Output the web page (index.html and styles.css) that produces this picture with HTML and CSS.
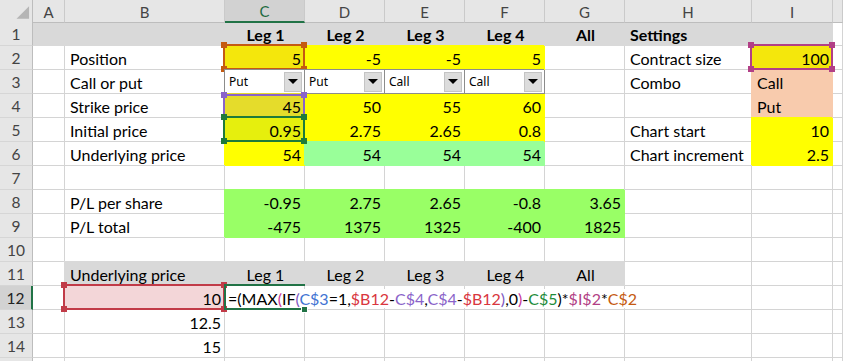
FILE: index.html
```html
<!DOCTYPE html>
<html>
<head>
<meta charset="utf-8">
<title>Option legs P/L</title>
<link rel="stylesheet" href="styles.css">
</head>
<body>
<div class="sheet">

  <div class="row hdr">
    <div class="corner"><svg width="33" height="22" viewBox="0 0 33 22"><polygon points="30,6 30,19 17,19" fill="#b5b5b5"/></svg></div>
    <div class="ch">A</div>
    <div class="ch">B</div>
    <div class="ch sel">C</div>
    <div class="ch">D</div>
    <div class="ch">E</div>
    <div class="ch">F</div>
    <div class="ch">G</div>
    <div class="ch">H</div>
    <div class="ch">I</div>
    <div class="ch"></div>
  </div>

  <div class="row">
    <div class="rh">1</div>
    <div class="c f-gr"></div>
    <div class="c f-gr"></div>
    <div class="c f-gr b ctr">Leg 1</div>
    <div class="c f-gr b ctr">Leg 2</div>
    <div class="c f-gr b ctr">Leg 3</div>
    <div class="c f-gr b ctr">Leg 4</div>
    <div class="c f-gr b ctr">All</div>
    <div class="c f-gr b">Settings</div>
    <div class="c f-gr"></div>
    <div class="c"></div>
  </div>

  <div class="row">
    <div class="rh">2</div>
    <div class="c"></div>
    <div class="c">Position</div>
    <div class="c num f-y2 ref ref-or">5</div>
    <div class="c num f-y">-5</div>
    <div class="c num f-y">-5</div>
    <div class="c num f-y">5</div>
    <div class="c"></div>
    <div class="c">Contract size</div>
    <div class="c num f-y2 ref ref-mg">100</div>
    <div class="c"></div>
  </div>

  <div class="row">
    <div class="rh">3</div>
    <div class="c"></div>
    <div class="c">Call or put</div>
    <div class="c combo"><span class="combo-text">Put</span><span class="combo-btn"></span></div>
    <div class="c combo"><span class="combo-text">Put</span><span class="combo-btn"></span></div>
    <div class="c combo"><span class="combo-text">Call</span><span class="combo-btn"></span></div>
    <div class="c combo"><span class="combo-text">Call</span><span class="combo-btn"></span></div>
    <div class="c"></div>
    <div class="c">Combo</div>
    <div class="c f-pe">Call</div>
    <div class="c"></div>
  </div>

  <div class="row">
    <div class="rh">4</div>
    <div class="c"></div>
    <div class="c">Strike price</div>
    <div class="c num f-y3 ref ref-pu">45</div>
    <div class="c num f-y">50</div>
    <div class="c num f-y">55</div>
    <div class="c num f-y">60</div>
    <div class="c"></div>
    <div class="c"></div>
    <div class="c f-pe">Put</div>
    <div class="c"></div>
  </div>

  <div class="row">
    <div class="rh">5</div>
    <div class="c"></div>
    <div class="c">Initial price</div>
    <div class="c num f-y4 ref ref-gn">0.95</div>
    <div class="c num f-y">2.75</div>
    <div class="c num f-y">2.65</div>
    <div class="c num f-y">0.8</div>
    <div class="c"></div>
    <div class="c">Chart start</div>
    <div class="c num f-y">10</div>
    <div class="c"></div>
  </div>

  <div class="row">
    <div class="rh">6</div>
    <div class="c"></div>
    <div class="c">Underlying price</div>
    <div class="c num f-y">54</div>
    <div class="c num f-lg">54</div>
    <div class="c num f-lg">54</div>
    <div class="c num f-lg">54</div>
    <div class="c"></div>
    <div class="c">Chart increment</div>
    <div class="c num f-y">2.5</div>
    <div class="c"></div>
  </div>

  <div class="row">
    <div class="rh">7</div>
    <div class="c"></div><div class="c"></div><div class="c"></div><div class="c"></div><div class="c"></div>
    <div class="c"></div><div class="c"></div><div class="c"></div><div class="c"></div><div class="c"></div>
  </div>

  <div class="row">
    <div class="rh">8</div>
    <div class="c"></div>
    <div class="c">P/L per share</div>
    <div class="c num f-g">-0.95</div>
    <div class="c num f-g">2.75</div>
    <div class="c num f-g">2.65</div>
    <div class="c num f-g">-0.8</div>
    <div class="c num f-g">3.65</div>
    <div class="c"></div>
    <div class="c"></div>
    <div class="c"></div>
  </div>

  <div class="row">
    <div class="rh">9</div>
    <div class="c"></div>
    <div class="c">P/L total</div>
    <div class="c num f-g">-475</div>
    <div class="c num f-g">1375</div>
    <div class="c num f-g">1325</div>
    <div class="c num f-g">-400</div>
    <div class="c num f-g">1825</div>
    <div class="c"></div>
    <div class="c"></div>
    <div class="c"></div>
  </div>

  <div class="row">
    <div class="rh">10</div>
    <div class="c"></div><div class="c"></div><div class="c"></div><div class="c"></div><div class="c"></div>
    <div class="c"></div><div class="c"></div><div class="c"></div><div class="c"></div><div class="c"></div>
  </div>

  <div class="row">
    <div class="rh">11</div>
    <div class="c"></div>
    <div class="c f-gr">Underlying price</div>
    <div class="c f-gr ctr">Leg 1</div>
    <div class="c f-gr ctr">Leg 2</div>
    <div class="c f-gr ctr">Leg 3</div>
    <div class="c f-gr ctr">Leg 4</div>
    <div class="c f-gr ctr">All</div>
    <div class="c"></div>
    <div class="c"></div>
    <div class="c"></div>
  </div>

  <div class="row">
    <div class="rh sel">12</div>
    <div class="c"></div>
    <div class="c num f-pk ref ref-rd">10</div>
    <div class="c edit"><span class="formula">=(MAX<span class="p2">(</span>IF<span class="p3">(</span><span class="k-bl">C$3</span>=1,<span class="k-rd">$B12</span>-<span class="k-pu">C$4</span>,<span class="k-pu">C$4</span>-<span class="k-rd">$B12</span><span class="p3">)</span>,0<span class="p2">)</span>-<span class="k-gn">C$5</span>)*<span class="k-mg">$I$2</span>*<span class="k-or">C$2</span></span></div>
    <div class="c"></div>
    <div class="c"></div>
    <div class="c"></div>
    <div class="c"></div>
    <div class="c"></div>
    <div class="c"></div>
    <div class="c"></div>
  </div>

  <div class="row">
    <div class="rh">13</div>
    <div class="c"></div>
    <div class="c num">12.5</div>
    <div class="c"></div><div class="c"></div><div class="c"></div><div class="c"></div>
    <div class="c"></div><div class="c"></div><div class="c"></div><div class="c"></div>
  </div>

  <div class="row">
    <div class="rh">14</div>
    <div class="c"></div>
    <div class="c num">15</div>
    <div class="c"></div><div class="c"></div><div class="c"></div><div class="c"></div>
    <div class="c"></div><div class="c"></div><div class="c"></div><div class="c"></div>
  </div>

  <div class="row">
    <div class="rh"></div>
    <div class="c"></div><div class="c"></div><div class="c"></div><div class="c"></div><div class="c"></div>
    <div class="c"></div><div class="c"></div><div class="c"></div><div class="c"></div><div class="c"></div>
  </div>

</div>
</body>
</html>
```

FILE: styles.css
```css
body {
    margin: 0;
    overflow: hidden;
    background: #fff;
    font-family: "Lato", "Liberation Sans", sans-serif;
    font-size: 16px;
    color: #000;
}
.sheet {
    width: 843px;
    height: 361px;
    overflow: hidden;
}
.row {
    display: grid;
    grid-template-columns: 33px 32px 160px 80px 80px 80px 80px 80px 127px 81px 1fr;
    height: 24px;
}
.hdr {
    height: 22px;
}

/* headers */
.corner, .ch, .rh {
    position: relative;
    z-index: 1;
    background: #e6e6e6;
    color: #444;
    display: flex;
    align-items: center;
    justify-content: center;
    box-sizing: border-box;
}
.corner {
    border-right: 1px solid #bdbdbd;
    border-bottom: 1px solid #bdbdbd;
}
.corner svg { display: block; }
.ch {
    font-size: 15px;
    border-right: 1px solid #cacaca;
    border-bottom: 1px solid #bdbdbd;
    padding-top: 1px;
}
.ch.sel {
    background: #d2d2d2;
    color: #1e6b3f;
    border-bottom: 2px solid #217346;
}
.rh {
    font-size: 15.5px;
    border-right: 1px solid #bdbdbd;
    border-bottom: 1px solid #d6d6d6;
    padding-top: 1px;
}
.rh.sel {
    background: #d2d2d2;
    color: #222;
    border-right: 2px solid #217346;
}

/* cells */
.c {
    box-sizing: border-box;
    border-right: 1px solid #d4d4d4;
    border-bottom: 1px solid #d4d4d4;
    padding: 0 3px 1px 5px;
    display: flex;
    align-items: flex-end;
    white-space: nowrap;
    overflow: hidden;
    min-width: 0;
}
.num { justify-content: flex-end; }
.ctr { justify-content: center; }
.b { font-weight: bold; }

.f-gr, .f-y, .f-y2, .f-y3, .f-y4, .f-lg, .f-g, .f-pe, .f-pk {
    background: var(--fill);
    border-color: var(--fill);
    box-shadow: -1px -1px 0 0 var(--fill);
}
.f-gr { --fill: #d9d9d9; }
.f-y  { --fill: #ffff00; }
.f-y2 { --fill: #f4e70c; }
.f-y3 { --fill: #e5dc2b; }
.f-y4 { --fill: #e6ef0d; }
.f-lg { --fill: #99ff99; }
.f-g  { --fill: #99ff66; }
.f-pe { --fill: #f8cbad; }
.f-pk { --fill: #f3d6d8; }

/* range reference boxes while editing */
.ref {
    position: relative;
    z-index: 2;
    overflow: visible;
}
.ref::after {
    content: "";
    position: absolute;
    left: -2px;
    top: -2px;
    right: -1px;
    bottom: -1px;
    border: 2px solid var(--ref);
}
.ref::before {
    content: "";
    position: absolute;
    left: -4px;
    top: -4px;
    right: -3px;
    bottom: -3px;
    z-index: 1;
    background:
        linear-gradient(var(--ref), var(--ref)) 0 0 / 6px 6px no-repeat,
        linear-gradient(var(--ref), var(--ref)) 100% 0 / 6px 6px no-repeat,
        linear-gradient(var(--ref), var(--ref)) 0 100% / 6px 6px no-repeat,
        linear-gradient(var(--ref), var(--ref)) 100% 100% / 6px 6px no-repeat;
}
.ref-or { --ref: #c55a11; }
.ref-mg { --ref: #b23f86; }
.ref-pu { --ref: #8a63c9; }
.ref-gn { --ref: #1f7a3a; z-index: 3; }
.ref-rd { --ref: #c13b48; }
.ref-pu::after { top: 0; }
.ref-pu::before { top: -2px; }

/* combo boxes in row 3 */
.combo {
    position: relative;
    z-index: 2;
    background: #fff;
    border-color: #8c8c8c;
    box-shadow: -1px -1px 0 0 #8c8c8c;
    align-items: center;
    justify-content: space-between;
    padding: 0 2px 0 4px;
}
.combo-text {
    font-family: "Noto Sans", "DejaVu Sans", sans-serif;
    font-size: 12px;
}
.combo-btn {
    box-sizing: border-box;
    width: 18px;
    height: 20px;
    background: #dcdcdc;
    border: 1px solid #c4c4c4;
    display: flex;
    align-items: center;
    justify-content: center;
}
.combo-btn::after {
    content: "";
    border-left: 5px solid transparent;
    border-right: 5px solid transparent;
    border-top: 5px solid #000;
}

/* cell in edit mode */
.edit {
    position: relative;
    z-index: 4;
    overflow: visible;
    padding-left: 3px;
}
.edit::after {
    content: "";
    position: absolute;
    left: -1px;
    top: -2px;
    right: -1px;
    bottom: -1px;
    border: 2px solid #217346;
    border-right: none;
}
.edit::before {
    content: "";
    position: absolute;
    right: -4px;
    bottom: -4px;
    width: 5px;
    height: 5px;
    background: #217346;
    border: 1px solid #fff;
    z-index: 1;
}
.formula {
    background: #fff;
    padding-right: 3px;
}
.p2 { color: #c8399a; }
.p3 { color: #7e57c2; }
.k-bl { color: #3f74d3; }
.k-rd { color: #d9363e; }
.k-pu { color: #8a63c9; }
.k-gn { color: #1e8c3a; }
.k-mg { color: #b23f86; }
.k-or { color: #c55a11; }
```
